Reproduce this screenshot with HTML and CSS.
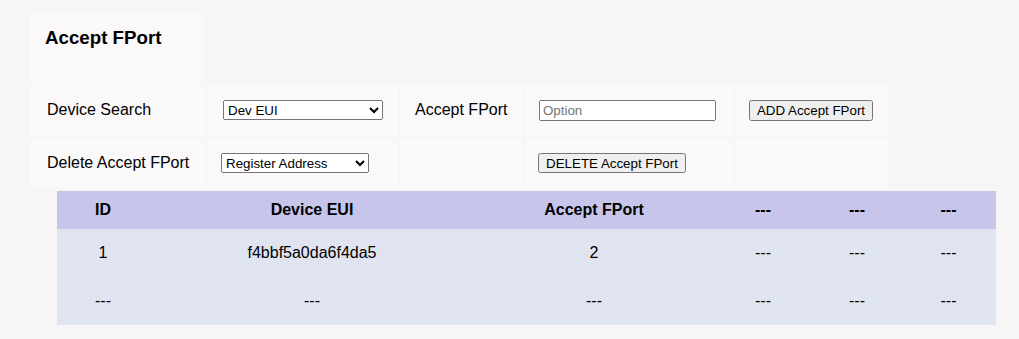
FILE: index.html
```html
<!DOCTYPE html>
<html lang="en">
<head>
    <meta charset="UTF-8">
    <meta name="viewport" content="width=device-width, initial-scale=1.0">
    <title>Accept FPort</title>
    <link rel="stylesheet" href="styles.css">
</head>
<body>

    <div class="page">
        <!-- Title and form -->
        <table class="form-table">
            <tr class="title-row">
                <td class="col-label"><h3>Accept FPort</h3></td>
            </tr>
            <tr class="form-row">
                <td class="col-label">Device Search</td>
                <td class="col-select">
                    <select class="search-select">
                        <option>Dev EUI</option>
                        <option>Register Address</option>
                    </select>
                </td>
                <td class="col-text">Accept FPort</td>
                <td class="col-input">
                    <input type="text" class="text-input" placeholder="Option">
                </td>
                <td class="col-button">
                    <button class="btn add-btn">ADD Accept FPort</button>
                </td>
            </tr>
            <tr class="form-row second">
                <td class="col-label">Delete Accept FPort</td>
                <td class="col-select">
                    <select class="delete-select">
                        <option>Register Address</option>
                        <option>Dev EUI</option>
                    </select>
                </td>
                <td class="col-text"></td>
                <td class="col-input">
                    <button class="btn delete-btn">DELETE Accept FPort</button>
                </td>
                <td class="col-button"></td>
            </tr>
        </table>

        <!-- Results -->
        <table class="data-table">
            <thead>
                <tr>
                    <th class="c-id">ID</th>
                    <th class="c-eui">Device EUI</th>
                    <th class="c-port">Accept FPort</th>
                    <th class="c-x1">---</th>
                    <th class="c-x2">---</th>
                    <th class="c-x3">---</th>
                </tr>
            </thead>
            <tbody>
                <tr>
                    <td>1</td>
                    <td>f4bbf5a0da6f4da5</td>
                    <td>2</td>
                    <td>---</td>
                    <td>---</td>
                    <td>---</td>
                </tr>
                <tr>
                    <td>---</td>
                    <td>---</td>
                    <td>---</td>
                    <td>---</td>
                    <td>---</td>
                    <td>---</td>
                </tr>
            </tbody>
        </table>
    </div>

</body>
</html>
```

FILE: styles.css
```css
body {
    margin: 0;
    font-family: "Liberation Sans", Arial, sans-serif;
    font-size: 16px;
    color: #000;
    background-color: #f8f5f6;
}
.page {
    padding: 10px 0 0 28px;
}
.form-table {
    border-collapse: separate;
    border-spacing: 2px;
}
.form-table td {
    background-color: #faf8f8;
    padding: 0 15px;
    vertical-align: middle;
    white-space: nowrap;
}
.title-row td {
    height: 70px;
    vertical-align: top;
    padding-left: 15px !important;
}
.title-row h3 {
    margin: 15px 0 0 0;
    font-size: 18.72px;
}
.form-row td {
    height: 52px;
}
.form-row.second td {
    height: 50px;
}
.col-label {
    width: 143px;
    padding-left: 17px !important;
}
.col-select {
    width: 160px;
}
.col-text {
    width: 93px;
}
.col-input {
    width: 178px;
}
.col-button {
    width: 123px;
}
select, input, button {
    font-family: "Liberation Sans", Arial, sans-serif;
    font-size: 13.33px;
}
.search-select {
    width: 160px;
    height: 20px;
    margin-left: 1px;
}
.delete-select {
    width: 148px;
    height: 20px;
    margin-left: -1px;
}
.text-input {
    width: 177px;
    height: 21px;
    box-sizing: border-box;
    margin-left: -1px;
    padding: 1px 2px;
}
.btn {
    height: 21px;
    padding: 0 4px;
    white-space: nowrap;
}
.add-btn {
    width: 124px;
    margin-left: -1px;
}
.delete-btn {
    width: 148px;
    height: 20px;
    margin-left: -2px;
}
.data-table {
    margin: 1px 0 0 29px;
    width: 939px;
    border-collapse: collapse;
    text-align: center;
}
.data-table th {
    background-color: #c8c5eb;
    height: 38px;
    padding: 0;
    font-weight: bold;
}
.data-table td {
    background-color: #e0e3f0;
    height: 48px;
    padding: 0;
}
.c-id { width: 92px; }
.c-eui { width: 326px; }
.c-port { width: 238px; }
.c-x1 { width: 100px; }
.c-x2 { width: 88px; }
.c-x3 { width: 95px; }
```
